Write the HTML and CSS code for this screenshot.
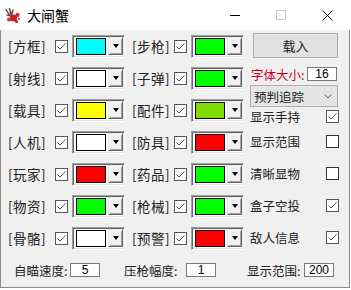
FILE: index.html
```html
<!DOCTYPE html>
<html lang="zh-CN">
<head>
<meta charset="utf-8">
<title>大闸蟹</title>
<link rel="stylesheet" href="styles.css">
</head>
<body>
<div class="window">
  <div class="titlebar">
    <svg class="app-icon" viewBox="0 0 17 17" width="17" height="17">
      <circle cx="9.5" cy="11" r="3.6" fill="#c8202a"/>
      <circle cx="13.5" cy="8" r="2.2" fill="#d83030"/>
      <circle cx="5" cy="12.5" r="2" fill="#d83030"/>
      <circle cx="12.5" cy="14.5" r="1.6" fill="#c8202a"/>
      <circle cx="15" cy="12" r="1" fill="#c8202a"/>
      <path d="M2 2.5 L5.5 8 M5.5 1.5 L7 7.5 M9 3 L7.5 8 M3 8 L6 9" stroke="#5a2a2a" stroke-width="1.3" fill="none" stroke-linecap="round"/>
    </svg>
    <span class="title">大闸蟹</span>
    <div class="caption">
      <span class="cap"><svg width="10" height="10" viewBox="0 0 10 10"><path d="M0 5.5 H10" stroke="#000" stroke-width="1"/></svg></span>
      <span class="cap"><svg width="10" height="10" viewBox="0 0 10 10"><rect x="0.5" y="0.5" width="9" height="9" fill="none" stroke="#c8c8c8" stroke-width="1"/></svg></span>
      <span class="cap"><svg width="11" height="11" viewBox="0 0 11 11"><path d="M0.5 0.5 L10.5 10.5 M10.5 0.5 L0.5 10.5" stroke="#000" stroke-width="1"/></svg></span>
    </div>
  </div>
  <div class="client">
    <div class="main">
      <div class="grid">
        <span class="lbl">[方框]</span><span class="cb on"></span><span class="combo"><span class="sw sw-cyan"></span><span class="dd"></span></span>
        <span class="lbl">[步枪]</span><span class="cb on"></span><span class="combo"><span class="sw sw-green"></span><span class="dd"></span></span>

        <span class="lbl">[射线]</span><span class="cb on"></span><span class="combo"><span class="sw sw-white"></span><span class="dd"></span></span>
        <span class="lbl">[子弹]</span><span class="cb on"></span><span class="combo"><span class="sw sw-green"></span><span class="dd"></span></span>

        <span class="lbl">[载具]</span><span class="cb on"></span><span class="combo"><span class="sw sw-yellow"></span><span class="dd"></span></span>
        <span class="lbl">[配件]</span><span class="cb on"></span><span class="combo"><span class="sw sw-lime"></span><span class="dd"></span></span>

        <span class="lbl">[人机]</span><span class="cb on"></span><span class="combo"><span class="sw sw-white"></span><span class="dd"></span></span>
        <span class="lbl">[防具]</span><span class="cb on"></span><span class="combo"><span class="sw sw-red"></span><span class="dd"></span></span>

        <span class="lbl">[玩家]</span><span class="cb on"></span><span class="combo"><span class="sw sw-red"></span><span class="dd"></span></span>
        <span class="lbl">[药品]</span><span class="cb on"></span><span class="combo"><span class="sw sw-green"></span><span class="dd"></span></span>

        <span class="lbl">[物资]</span><span class="cb on"></span><span class="combo"><span class="sw sw-green"></span><span class="dd"></span></span>
        <span class="lbl">[枪械]</span><span class="cb on"></span><span class="combo"><span class="sw sw-green"></span><span class="dd"></span></span>

        <span class="lbl">[骨骼]</span><span class="cb on"></span><span class="combo"><span class="sw sw-white"></span><span class="dd"></span></span>
        <span class="lbl">[预警]</span><span class="cb on"></span><span class="combo"><span class="sw sw-red"></span><span class="dd"></span></span>
      </div>
      <div class="side">
        <div class="btn-load">载入</div>
        <div class="font-row"><span class="font-label">字体大小:</span><span class="tbox">16</span></div>
        <div class="select"><span>预判追踪</span><svg class="chev" width="8" height="5" viewBox="0 0 8 5"><path d="M0.5 0.5 L4 4 L7.5 0.5" fill="none" stroke="#555" stroke-width="1"/></svg></div>
        <div class="opt first"><span>显示手持</span><span class="cb on"></span></div>
        <div class="opt"><span>显示范围</span><span class="cb"></span></div>
        <div class="opt"><span>清晰显物</span><span class="cb"></span></div>
        <div class="opt"><span>盒子空投</span><span class="cb on"></span></div>
        <div class="opt"><span>敌人信息</span><span class="cb on"></span></div>
      </div>
    </div>
    <div class="bottom">
      <span class="bl bl1">自瞄速度:</span><span class="tbox">5</span>
      <span class="bl bl2">压枪幅度:</span><span class="tbox">1</span>
      <span class="bl bl3">显示范围:</span><span class="tbox">200</span>
    </div>
  </div>
</div>
</body>
</html>
```

FILE: styles.css
```css
* { box-sizing: border-box; }
html, body { margin: 0; padding: 0; background: #fff; }
body {
  font-family: "Noto Sans CJK SC", "Liberation Sans", sans-serif;
  color: #000;
  width: 351px;
  height: 290px;
  overflow: hidden;
}
.window {
  width: 350px;
  height: 288px;
  display: flex;
  flex-direction: column;
}
.titlebar {
  height: 30px;
  flex: none;
  display: flex;
  align-items: center;
  background: #fff;
}
.app-icon { margin-left: 4px; flex: none; }
.title { margin-left: 6px; font-size: 14px; line-height: 1; }
.caption { margin-left: auto; display: flex; height: 30px; }
.cap {
  width: 46px;
  height: 30px;
  display: flex;
  align-items: center;
  justify-content: center;
}
.client {
  flex: 1;
  background: #f0f0f0;
  border: 1px solid #8c8c8c;
  border-top: none;
  display: flex;
  flex-direction: column;
}
.main { display: flex; }
.grid {
  display: grid;
  grid-template-columns: 47px 17px 60px 42px 17px 53px;
  grid-auto-rows: 32px;
  align-items: center;
  padding-left: 7px;
}
.lbl {
  font-size: 13.5px;
  line-height: 16px;
  letter-spacing: 0.5px;
  white-space: nowrap;
  color: #222;
}
.cb {
  width: 13px;
  height: 13px;
  border: 1px solid #333;
  background: #fff;
  display: block;
  position: relative;
}
.cb.on {
  border-color: #555;
  background: #fff url("data:image/svg+xml;utf8,<svg xmlns='http://www.w3.org/2000/svg' width='11' height='11' viewBox='0 0 11 11'><polyline points='1.5,5.5 4,8 9.5,2.5' fill='none' stroke='%23555' stroke-width='1'/></svg>") no-repeat center;
}
.combo {
  width: 53px;
  height: 23px;
  display: flex;
  border: 1px solid;
  border-color: #a0a0a0 #fff #fff #a0a0a0;
  box-shadow: inset 1px 1px 0 #696969, inset -1px -1px 0 #e3e3e3;
  background: #fff;
  padding: 1px 1px 2px 1px;
}
.sw {
  flex: 1;
  margin: 1px 2px 0 2px;
  border: 1px solid #000;
}
.sw-cyan { background: #00ffff; }
.sw-green { background: #00ff00; }
.sw-white { background: #ffffff; }
.sw-yellow { background: #ffff00; }
.sw-lime { background: #80dc00; }
.sw-red { background: #ff0000; }
.dd {
  width: 15px;
  flex: none;
  background: #f0f0f0;
  border: 1px solid;
  border-color: #e3e3e3 #696969 #696969 #e3e3e3;
  box-shadow: inset 1px 1px 0 #fff, inset -1px -1px 0 #a0a0a0;
  display: flex;
  align-items: center;
  justify-content: center;
}
.dd::after {
  content: "";
  width: 0;
  height: 0;
  border-left: 3.5px solid transparent;
  border-right: 3.5px solid transparent;
  border-top: 4px solid #000;
  margin-top: 1px;
}
.side {
  width: 89px;
  margin-left: 6px;
  display: flex;
  flex-direction: column;
  font-size: 12.5px;
  color: #222;
}
.btn-load {
  margin: 3px 1px 0 3px;
  height: 25px;
  border: 1px solid #adadad;
  background: #e1e1e1;
  font-size: 13px;
  display: flex;
  align-items: center;
  justify-content: center;
}
.font-row {
  margin-top: 9px;
  height: 14px;
  display: flex;
  align-items: center;
}
.font-label { color: #c8001e; padding-left: 1px; white-space: nowrap; }
.tbox {
  width: 30px;
  height: 14px;
  flex: none;
  border: 1px solid #7a7a7a;
  background: #fff;
  font-family: "Liberation Sans", sans-serif;
  font-size: 12px;
  line-height: 12px;
  color: #000;
  display: flex;
  align-items: center;
  justify-content: center;
}
.font-row .tbox { margin-left: auto; margin-right: 2px; }
.select {
  margin-top: 4px;
  height: 22px;
  width: 88px;
  border: 1px solid #adadad;
  background: #e5e5e5;
  display: flex;
  align-items: center;
  padding-left: 3px;
}
.chev { margin-left: auto; margin-right: 5px; }
.opt {
  height: 32px;
  display: flex;
  align-items: center;
  white-space: nowrap;
}
.opt.first { height: 18px; }
.opt .cb { margin-left: auto; }
.bottom {
  height: 32px;
  display: flex;
  align-items: center;
  padding-left: 13px;
  font-size: 12.5px;
  color: #222;
}
.bl { white-space: nowrap; flex: none; }
.bl1 { width: 56px; }
.bl2 { width: 62px; margin-left: 24px; }
.bl3 { width: 57px; margin-left: 31px; }
```
